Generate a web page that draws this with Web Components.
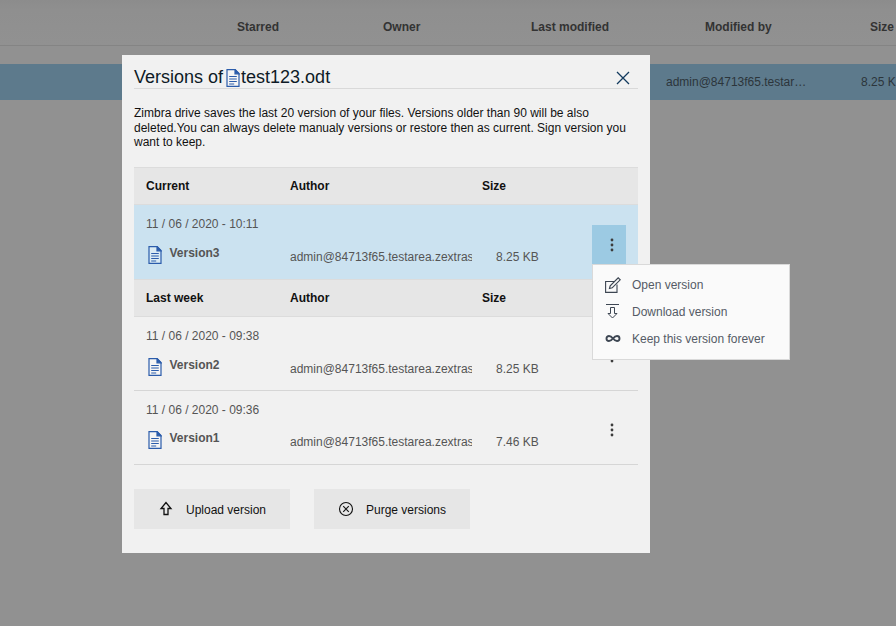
<!DOCTYPE html>
<html>
<head>
<meta charset="utf-8">
<title>Versions</title>
<style>
    html, body { margin: 0; height: 100%; }
    body { font-family: "Liberation Sans", Arial, sans-serif; overflow: hidden; }
</style>
</head>
<body>
<drive-page>
    <versions-dialog filename="test123.odt">
        <version-head label="Current"></version-head>
        <version-row selected date="11 / 06 / 2020 - 10:11" name="Version3" size="8.25 KB" menu></version-row>
        <version-head label="Last week"></version-head>
        <version-row date="11 / 06 / 2020 - 09:38" name="Version2" size="8.25 KB"></version-row>
        <version-row tight date="11 / 06 / 2020 - 09:36" name="Version1" size="7.46 KB"></version-row>
    </versions-dialog>
</drive-page>

<script>
const fileIcon = (w, h) => `
    <svg width="${w}" height="${h}" viewBox="0 0 14 18" fill="none" stroke="#2b5cab" stroke-width="1.2" style="display:block;flex:none">
        <path d="M1 .6h8.200l3.800 4v12.800H1z" fill="#fff" fill-opacity=".3"/>
        <path d="M9 .6v4.200h4z" fill="#2b5cab"/>
        <path d="M3.200 7.500h7.600M3.200 10h7.600M3.200 12.500h7.600M3.200 15h5" stroke-width="1"/>
    </svg>`;

class DrivePage extends HTMLElement {
    constructor(){
        super();
        this.attachShadow({mode:'open'});
    }
    connectedCallback(){
        this.shadowRoot.innerHTML = `
            <style>
                :host{
                    display:block;
                    height:626px;
                    background:#919191;
                    color:#333;
                    font-size:12px;
                    position:relative;
                    overflow:hidden;
                }
                .head{
                    height:46px;
                    box-sizing:border-box;
                    border-bottom:1px solid #848484;
                    display:flex;
                    align-items:center;
                    padding-top:8px;
                    font-weight:bold;
                    background:linear-gradient(#8c8c8c, #8f8f8f 10px, #919191);
                }
                .row{
                    margin-top:18px;
                    height:36px;
                    background:#5d7a8c;
                    display:flex;
                    align-items:center;
                    color:#2c353b;
                }
                .c1{ width:237px; }
                .c2{ width:146px; }
                .c3{ width:148px; }
                .c4{ width:174px; }
                .m{ margin-left:666px; width:195px; flex:none; white-space:nowrap; }
                .s{ flex:none; white-space:nowrap; }
            </style>
            <div class="head">
                <span class="c1"></span>
                <span class="c2">Starred</span>
                <span class="c3">Owner</span>
                <span class="c4">Last modified</span>
                <span style="width:165px">Modified by</span>
                <span>Size</span>
            </div>
            <div class="row">
                <span class="m">admin@84713f65.testar…</span>
                <span class="s">8.25 KB</span>
            </div>
            <slot></slot>
        `;
    }
}

class VersionsDialog extends HTMLElement {
    constructor(){
        super();
        this.attachShadow({mode:'open'});
    }
    connectedCallback(){
        const style = `
            <style>
                :host{
                    display:block;
                    position:absolute;
                    left:122px;
                    top:55px;
                    width:528px;
                    height:498px;
                    box-sizing:border-box;
                    padding:0 12px;
                    background:#f1f1f1;
                    color:#111;
                    font-size:12px;
                }
                .title{
                    height:34px;
                    box-sizing:border-box;
                    border-bottom:1px solid #d9d9d9;
                    display:flex;
                    align-items:center;
                    padding-top:12px;
                    font-size:18px;
                    color:#0e1a26;
                    white-space:nowrap;
                }
                .title svg.file{ margin:0 1px 0 3px; }
                .close{ margin:0 8px 0 auto; display:block; }
                p{
                    margin:17px 0 17px;
                    line-height:14.5px;
                    height:44px;
                }
                .actions{
                    display:flex;
                    gap:24px;
                    margin-top:24px;
                }
            </style>
        `;
        const template = `
            <div class="title">
                <span>Versions of</span>
                <span style="display:contents">${fileIcon(14, 18).replace('<svg', '<svg class="file"')}</span>
                <span>${this.getAttribute('filename')}</span>
                <svg class="close" width="14" height="14" viewBox="0 0 14 14" fill="none" stroke="#123a5e" stroke-width="1.3">
                    <path d="M1 1l12 12M13 1L1 13"/>
                </svg>
            </div>
            <p>Zimbra drive saves the last 20 version of your files. Versions older than 90 will be also deleted.You can always delete manualy versions or restore then as current. Sign version you want to keep.</p>
            <slot></slot>
            <div class="actions">
                <action-button label="Upload version" icon="upload"></action-button>
                <action-button label="Purge versions" icon="purge"></action-button>
            </div>
        `;
        this.shadowRoot.innerHTML = style + template;
    }
}

class VersionHead extends HTMLElement {
    constructor(){
        super();
        this.attachShadow({mode:'open'});
    }
    connectedCallback(){
        this.shadowRoot.innerHTML = `
            <style>
                :host{
                    display:grid;
                    grid-template-columns:144px 192px 1fr;
                    align-items:center;
                    height:38px;
                    box-sizing:border-box;
                    padding-left:12px;
                    background:#e6e6e6;
                    border-top:1px solid #dcdcdc;
                    border-bottom:1px solid #dcdcdc;
                    font-weight:bold;
                    color:#111;
                }
            </style>
            <span>${this.getAttribute('label')}</span>
            <span>Author</span>
            <span>Size</span>
        `;
    }
}

class VersionRow extends HTMLElement {
    constructor(){
        super();
        this.attachShadow({mode:'open'});
    }
    connectedCallback(){
        const menu = this.hasAttribute('menu') ? '<version-menu></version-menu>' : '';
        this.shadowRoot.innerHTML = `
            <style>
                :host{
                    --n:0px;
                    display:grid;
                    grid-template-columns:156px 182px 120px 40px;
                    grid-template-rows:38px 1fr;
                    height:74px;
                    box-sizing:border-box;
                    color:#555;
                    position:relative;
                    border-bottom:1px solid #d6d6d6;
                }
                :host([tight]){ --n:-1px; }
                :host([selected]){
                    background:#cbe2f0;
                    border-bottom:0;
                }
                .date{ grid-column:1 / 3; padding:12px 0 0 12px; line-height:14px; }
                .name{
                    grid-column:1;
                    grid-row:2;
                    display:flex;
                    gap:8px;
                    padding-left:14px;
                    font-weight:bold;
                    line-height:14px;
                    align-items:flex-start;
                    height:18px;
                    margin-top:var(--n);
                }
                .name svg{ margin-top:3px; }
                .name span{ margin-top:3px; margin-left:-.5px; }
                .author{
                    grid-column:2;
                    grid-row:2;
                    overflow:hidden;
                    white-space:nowrap;
                    margin-top:calc(7px + var(--n));
                    line-height:14px;
                }
                .size{ grid-column:3; grid-row:2; margin:calc(7px + var(--n)) 0 0 24px; line-height:14px; }
                .more{
                    position:absolute;
                    left:458px;
                    top:19px;
                    width:34px;
                    height:39px;
                    box-sizing:border-box;
                    padding-left:6px;
                    display:flex;
                    align-items:center;
                    justify-content:center;
                }
                :host([menu]) .more{ background:#9ccae3; top:20px; }
            </style>
            <div class="date">${this.getAttribute('date')}</div>
            <div class="name">${fileIcon(14, 18)}<span>${this.getAttribute('name')}</span></div>
            <div class="author">admin@84713f65.testarea.zextras</div>
            <div class="size">${this.getAttribute('size')}</div>
            <div class="more">
                <svg width="4" height="14" viewBox="0 0 4 14" fill="#3c3c3c" style="display:block">
                    <circle cx="2" cy="2" r="1.400"/><circle cx="2" cy="7" r="1.400"/><circle cx="2" cy="12" r="1.400"/>
                </svg>
            </div>
            ${menu}
        `;
    }
}

class VersionMenu extends HTMLElement {
    constructor(){
        super();
        this.attachShadow({mode:'open'});
    }
    connectedCallback(){
        this.shadowRoot.innerHTML = `
            <style>
                :host{
                    display:block;
                    position:absolute;
                    left:458px;
                    top:59px;
                    z-index:5;
                    width:198px;
                    height:96px;
                    box-sizing:border-box;
                    padding:6px 0 0 12px;
                    background:#fafafa;
                    border:1px solid #d9d9d9;
                    color:#555b66;
                }
                div{
                    display:flex;
                    align-items:center;
                    height:27px;
                    white-space:nowrap;
                }
                svg{ width:16px; height:16px; margin-right:11px; display:block; flex:none; }
            </style>
            <div>
                <svg viewBox="0 0 16 16" fill="none" stroke="#3d4652" stroke-width="1.100">
                    <path d="M9 4.500H.6V15.400H12V7.500"/>
                    <path d="M4.500 11.500l.7-2.800L13.200 .8l2 2-8 8z" stroke-width="1.200"/>
                </svg>
                Open version
            </div>
            <div>
                <svg viewBox="0 0 16 16" fill="none" stroke="#3d4652" stroke-width="1">
                    <path d="M1 .5h13"/>
                    <path d="M7.500 14L3 9.500h2.500V3.500h4v6H12z"/>
                </svg>
                Download version
            </div>
            <div>
                <svg viewBox="0 0 16 16" fill="none" stroke="#3d4652" stroke-width="1.900">
                    <path d="M8 7.500C6.500 5.600 5.500 5 4 5a2.500 2.500 0 000 5c1.500 0 2.500-.6 4-2.500S10.500 5 12 5a2.500 2.500 0 010 5c-1.500 0-2.500-.6-4-2.500z"/>
                </svg>
                Keep this version forever
            </div>
        `;
    }
}

class ActionButton extends HTMLElement {
    constructor(){
        super();
        this.attachShadow({mode:'open'});
    }
    connectedCallback(){
        const icons = {
            upload: `<path d="M8 1.500L3 7.500h3v6h4v-6h3z" stroke-width="1.300"/>`,
            purge: `<circle cx="8" cy="8" r="6.500"/><path d="M5.200 5.200l5.600 5.600M10.800 5.200l-5.600 5.600"/>`
        };
        this.shadowRoot.innerHTML = `
            <style>
                :host{
                    display:flex;
                    align-items:center;
                    justify-content:center;
                    gap:12px;
                    width:156px;
                    height:40px;
                    background:#e6e6e6;
                    color:#111;
                    white-space:nowrap;
                }
                svg{ display:block; width:16px; height:16px; flex:none; }
                span{ padding-top:2px; }
            </style>
            <svg viewBox="0 0 16 16" fill="none" stroke="#111" stroke-width="1.100">${icons[this.getAttribute('icon')]}</svg>
            <span>${this.getAttribute('label')}</span>
        `;
    }
}

customElements.define('drive-page', DrivePage);
customElements.define('versions-dialog', VersionsDialog);
customElements.define('version-head', VersionHead);
customElements.define('version-row', VersionRow);
customElements.define('version-menu', VersionMenu);
customElements.define('action-button', ActionButton);
</script>
</body>
</html>
